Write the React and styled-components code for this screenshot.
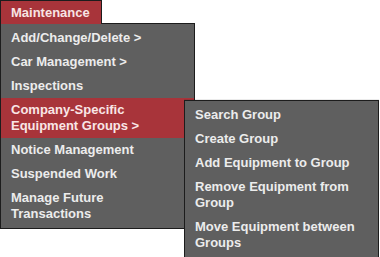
import React from 'react';
import styled, { createGlobalStyle } from 'styled-components';

const GlobalStyle = createGlobalStyle`
  html, body {
    margin: 0;
    padding: 0;
    background: #ffffff;
  }
  body {
    font-family: "Liberation Sans", Arial, sans-serif;
    font-size: 13px;
    font-weight: bold;
  }
`;

const RED = '#a8343a';
const GRAY = '#5f5f5f';
const EDGE = '#1c1c1c';

const Page = styled.div`
  min-height: 257px;
  width: 380px;
  overflow: hidden;
`;

const Menu = styled.div`
  display: flex;
  flex-direction: column;
  align-items: flex-start;
  width: 195px;
`;

const Tab = styled.div`
  position: relative;
  z-index: 2;
  box-sizing: border-box;
  width: 102px;
  height: 24px;
  padding: 4px 10px 3px 10px;
  line-height: 16px;
  background: ${RED};
  color: #f7e4e4;
  border: 1px solid ${EDGE};
  border-bottom: none;
`;

const Panel = styled.ul`
  list-style: none;
  box-sizing: border-box;
  width: 195px;
  margin: -1px 0 0 0;
  padding: 2px 0;
  background: ${GRAY};
  border: 1px solid ${EDGE};
`;

const Item = styled.li`
  position: relative;
  padding: 4px 10px;
  line-height: 16px;
  color: ${(p) => (p.$active ? '#f9e6e6' : '#ececec')};
  background: ${(p) => (p.$active ? RED : 'transparent')};
`;

const Flyout = styled.ul`
  position: absolute;
  z-index: 3;
  top: 2px;
  left: 183px;
  list-style: none;
  box-sizing: border-box;
  width: 195px;
  margin: 0;
  padding: 2px 0;
  background: ${GRAY};
  border: 1px solid ${EDGE};
  box-shadow: 0 -1px 0 rgba(0, 0, 0, 0.08);
`;

const SubItem = styled.li`
  padding: 4px 10px;
  line-height: 16px;
  color: #ececec;
`;

const mainItems = [
  'Add/Change/Delete >',
  'Car Management >',
  'Inspections',
  'Company-Specific Equipment Groups >',
  'Notice Management',
  'Suspended Work',
  'Manage Future Transactions',
];

const subItems = [
  'Search Group',
  'Create Group',
  'Add Equipment to Group',
  'Remove Equipment from Group',
  'Move Equipment between Groups',
];

export default function App() {
  return (
    <Page>
      <GlobalStyle />
      <Menu>
        <Tab>Maintenance</Tab>
        <Panel>
          {mainItems.map((label, i) => (
            <Item key={label} $active={i === 3}>
              {label}
              {i === 3 && (
                <Flyout>
                  {subItems.map((s) => (
                    <SubItem key={s}>{s}</SubItem>
                  ))}
                </Flyout>
              )}
            </Item>
          ))}
        </Panel>
      </Menu>
    </Page>
  );
}
